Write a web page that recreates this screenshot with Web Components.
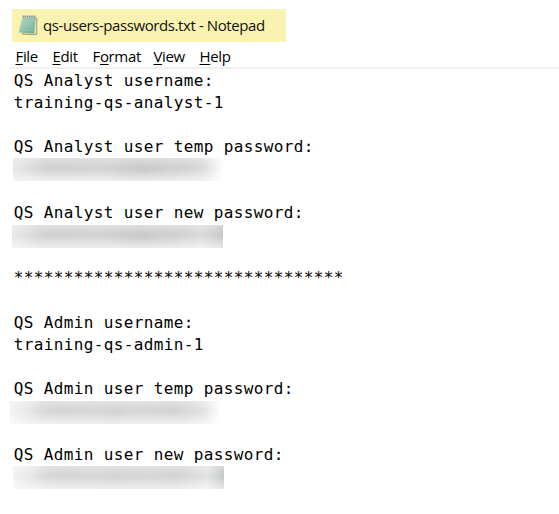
<!DOCTYPE html>
<html lang="en">
<head>
<meta charset="utf-8">
<title>qs-users-passwords.txt - Notepad</title>
<style>html,body{margin:0;background:#fff;height:514px;overflow:hidden}</style>
</head>
<body>
<note-window></note-window>
<script>
const define = (name, html) => customElements.define(name, class extends HTMLElement {
  constructor() {
    super();
    const t = document.createElement('template');
    t.innerHTML = html;
    this.attachShadow({mode: 'open'}).append(t.content.cloneNode(true));
  }
});

define('notepad-icon', `<style>:host{display:block;width:20px;height:21px}svg{display:block}</style>
<svg width="20" height="21" viewBox="0 0 20 21">
  <defs><linearGradient id="g" x1="0" y1="0" x2="1" y2="1"><stop offset="0" stop-color="#b5d6c1"/><stop offset=".5" stop-color="#8fc3af"/><stop offset="1" stop-color="#62a594"/></linearGradient></defs>
  <path d="M17.5 2 L19.3 3 V19 L17 20.3 L4 19.4 V18 H15Z" fill="#a69c74"/>
  <path d="M17.5 2 L18.3 3.5 V18.3 L16.5 19.3 L5 18.6Z" fill="#e3dcae"/>
  <path d="M4.4 2 H17.8 L16 18.6 L.8 17.6Z" fill="url(#g)"/>
  <path d="M4.2 6H17M3.8 9H16.7M3.2 12H16.4M2.6 15H16.1" stroke="#bedfc9" stroke-width=".7" opacity=".5"/>
  <path d="M4.5 1.6H18" stroke="#c9cbbb" stroke-width="1.8"/>
  <path d="M5.2 .5V2.4M7.4 .5V2.4M9.6 .5V2.4M11.8 .5V2.4M14 .5V2.4M16.2 .5V2.4" stroke="#7c8074" stroke-width=".9"/>
</svg>`);

define('title-bar', `<style>
:host{display:flex;align-items:center;box-sizing:border-box;width:274px;height:33px;margin:9px 0 0 12px;padding:0 0 1px 6px;background:#f9f2b1;color:#111;font:15px/20px "Open Sans","Noto Sans",sans-serif}
span{margin-left:5px;white-space:pre;letter-spacing:-.41px}
</style><notepad-icon></notepad-icon><span><slot></slot></span>`);

define('menu-item', `<style>
:host{display:block;white-space:nowrap}
::slotted(u){text-decoration:underline;text-underline-offset:2px;text-decoration-thickness:1px;text-decoration-skip-ink:none}
</style><slot></slot>`);

define('menu-bar', `<style>
:host{display:grid;grid-template-columns:37px 40px 61px 46px 40px;height:25px;margin-left:9px;padding-left:6.5px;border-bottom:2px solid #f0f0f0;color:#000;font:15px/29px "Open Sans","Noto Sans",sans-serif;letter-spacing:-.35px}
</style>
<menu-item><u>F</u>ile</menu-item><menu-item><u>E</u>dit</menu-item><menu-item>F<u>o</u>rmat</menu-item><menu-item><u>V</u>iew</menu-item><menu-item><u>H</u>elp</menu-item>`);

define('text-line', `<style>
:host{display:block;height:22px;padding-left:13.8px;color:#000;font:16px/22px "DejaVu Sans Mono",monospace;letter-spacing:.367px;white-space:pre}
</style><slot></slot>`);

define('blurred-line', `<style>
:host{display:block;height:22px}
div{width:211px;height:23px;overflow:hidden;margin-left:var(--x,13px);margin-top:var(--y,0px);background:
 radial-gradient(ellipse 38px 18px at 45px 9px,#bbb4,#bbb0),
 radial-gradient(ellipse 36px 20px at 132px 13px,#aaa5,#aaa0),
 radial-gradient(ellipse 50px 18px at 97px 9px,#b6b6b633,#b6b6b600),
 radial-gradient(ellipse 38px 18px at 172px 8px,#b4b4b440,#b4b4b400),
 linear-gradient(90deg,#e8e8e8,#d9d9d9 15%,#dadada 78%,#e2e2e2 90%,var(--end,#fff) 100%)}
:host([admin]) div{background:
 radial-gradient(ellipse 35px 17px at 53px 9px,#b5b5b540,#b5b5b500),
 radial-gradient(ellipse 40px 19px at 103px 11px,#b5b5b540,#b5b5b500),
 radial-gradient(ellipse 43px 18px at 160px 9px,#b8b8b840,#b8b8b800),
 linear-gradient(90deg,#f3f3f2,#dfdfdf 15%,#dcdcdc 78%,#e6e6e6 92%,var(--end,#fff) 100%)}
div::after{content:"";display:block;height:100%;background:linear-gradient(#ffffff40,#fff0 35%,#fff0 50%,#ffffff90)}
</style><div></div>`);

define('note-window', `<style>:host{display:flex;flex-direction:column;width:559px;height:514px;background:#fff}main{display:flex;flex-direction:column;padding-top:1px}.stars{line-height:20px}</style>
<title-bar>qs-users-passwords.txt - Notepad</title-bar>
<menu-bar></menu-bar>
<main>
<text-line>QS Analyst username:</text-line>
<text-line>training-qs-analyst-1</text-line>
<text-line></text-line>
<text-line>QS Analyst user temp password:</text-line>
<blurred-line></blurred-line>
<text-line></text-line>
<text-line>QS Analyst user new password:</text-line>
<blurred-line style="--x:12px;--y:1px;--end:#c8c8c8"></blurred-line>
<text-line></text-line>
<text-line class="stars">*********************************</text-line>
<text-line></text-line>
<text-line>QS Admin username:</text-line>
<text-line>training-qs-admin-1</text-line>
<text-line></text-line>
<text-line>QS Admin user temp password:</text-line>
<blurred-line admin style="--x:10px;--y:1px"></blurred-line>
<text-line></text-line>
<text-line>QS Admin user new password:</text-line>
<blurred-line admin style="--end:#c5c8c9"></blurred-line>
</main>`);
</script>
</body>
</html>
